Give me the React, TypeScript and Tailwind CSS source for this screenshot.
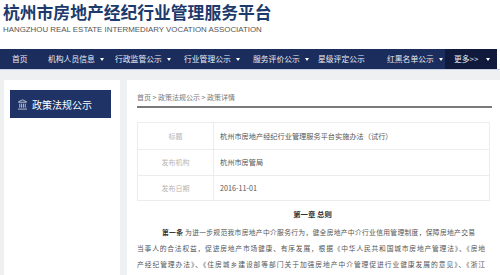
import { Landmark } from 'lucide-react';

const cjk = { fontFamily: '"Noto Sans CJK SC", "Noto Sans", sans-serif' };

type NavItem = { label: string; width: string; arrow: boolean };

const navItems: NavItem[] = [
  { label: '首页', width: 'w-[36px]', arrow: false },
  { label: '机构人员信息', width: 'w-[67px]', arrow: true },
  { label: '行政监管公示', width: 'w-[69px]', arrow: true },
  { label: '行业管理公示', width: 'w-[69px]', arrow: true },
  { label: '服务评价公示', width: 'w-[65px]', arrow: true },
  { label: '星级评定公示', width: 'w-[69px]', arrow: false },
  { label: '红黑名单公示', width: 'w-[70px]', arrow: true },
];

function Caret() {
  return <span className="ml-[5px] inline-block h-0 w-0 shrink-0 border-x-[2px] border-t-[3px] border-x-transparent border-t-white" />;
}

function Header() {
  return (
    <div className="h-[49px] bg-white pl-[3px] pt-[3px]">
      <div
        className="text-[16.8px] font-bold leading-[18px] text-[#1d3a6c]"
        style={{ fontFamily: '"Noto Sans CJK SC", serif' }}
      >
        杭州市房地产经纪行业管理服务平台
      </div>
      <div className="mt-[4px] text-[7.9px] leading-[10px] text-[#555]" style={{ fontFamily: '"Liberation Sans", sans-serif' }}>
        HANGZHOU REAL ESTATE INTERMEDIARY VOCATION ASSOCIATION
      </div>
    </div>
  );
}

function Nav() {
  return (
    <div className="flex h-[20px] w-[497px] bg-[#1b2d5c] text-[7.8px] text-[#e8ecf5]" style={cjk}>
      {navItems.map(item => (
        <div key={item.label} className={`flex shrink-0 items-center whitespace-nowrap pl-[12px] ${item.width}`}>
          <span>{item.label}</span>
          {item.arrow && <Caret />}
        </div>
      ))}
      <div className="flex flex-1 items-center whitespace-nowrap bg-[#0f1a3d] pl-[9px]">
        <span>更多&gt;&gt;</span>
        <span className="ml-[8px] inline-block h-0 w-0 border-x-[2px] border-t-[3px] border-x-transparent border-t-white" />
      </div>
    </div>
  );
}

function Sidebar() {
  return (
    <div className="ml-[4px] w-[116px] bg-white pl-[6px] pt-[10px]">
      <div className="flex h-[28px] w-[101px] items-center bg-[#1f3366] pl-[7px] text-white">
        <Landmark size={11} strokeWidth={1.5} />
        <span className="ml-[4px] text-[10px]" style={cjk}>政策法规公示</span>
      </div>
    </div>
  );
}

const rows = [
  { label: '标题', value: '杭州市房地产经纪行业管理服务平台实施办法（试行）', h: 'h-[26px]' },
  { label: '发布机构', value: '杭州市房管局', h: 'h-[26px]' },
  { label: '发布日期', value: '2016-11-01', h: 'h-[25px]' },
];

function Content() {
  return (
    <div className="ml-[7px] flex-1 bg-white pl-[10px] pr-[8px]" style={cjk}>
      <div className="flex h-[26px] items-end pb-[5px] text-[7px] leading-[8px] text-[#777]">
        首页 &gt; 政策法规公示 &gt; 政策详情
      </div>
      <div className="h-[2px] bg-[#7a7a7a]" />
      <div className="mr-[2px] mt-[14px] border border-[#ececec]">
        {rows.map((r, i) => (
          <div key={r.label} className={`flex ${r.h} ${i > 0 ? 'border-t border-[#ececec]' : ''}`}>
            <div className="flex w-[76px] items-center justify-center border-r border-[#ececec] text-[7px] text-[#b5b5b5]">
              {r.label}
            </div>
            <div className="flex items-center pl-[6px] text-[7.2px] text-[#555]">{r.value}</div>
          </div>
        ))}
      </div>
      <div className="mt-[7px] pr-[4px] text-center text-[7.4px] font-bold leading-[12px] text-[#333]">第一章 总则</div>
      <div className="mt-[4px] w-[348px] overflow-hidden text-[6.8px] leading-[16px] text-[#555]">
        <div className="whitespace-nowrap pl-[25px] pr-[10px] text-justify [text-align-last:justify]">
          <span className="font-bold text-[#333]">第一条</span> 为进一步规范我市房地产中介服务行为，健全房地产中介行业信用管理制度，保障房地产交易
        </div>
        <div className="whitespace-nowrap text-justify [text-align-last:justify]">
          当事人的合法权益，促进房地产市场健康、有序发展，根据《中华人民共和国城市房地产管理法》、《房地
        </div>
        <div className="whitespace-nowrap text-justify [text-align-last:justify]">
          产经纪管理办法》、《住房城乡建设部等部门关于加强房地产中介管理促进行业健康发展的意见》、《浙江
        </div>
      </div>
    </div>
  );
}

export default function App() {
  return (
    <div className="h-[275px] w-[500px] overflow-hidden bg-white">
      <Header />
      <Nav />
      <div className="flex h-[206px] border-t border-[#c9d3e3] bg-[#eff0f2] pt-[10px]">
        <Sidebar />
        <Content />
      </div>
    </div>
  );
}
